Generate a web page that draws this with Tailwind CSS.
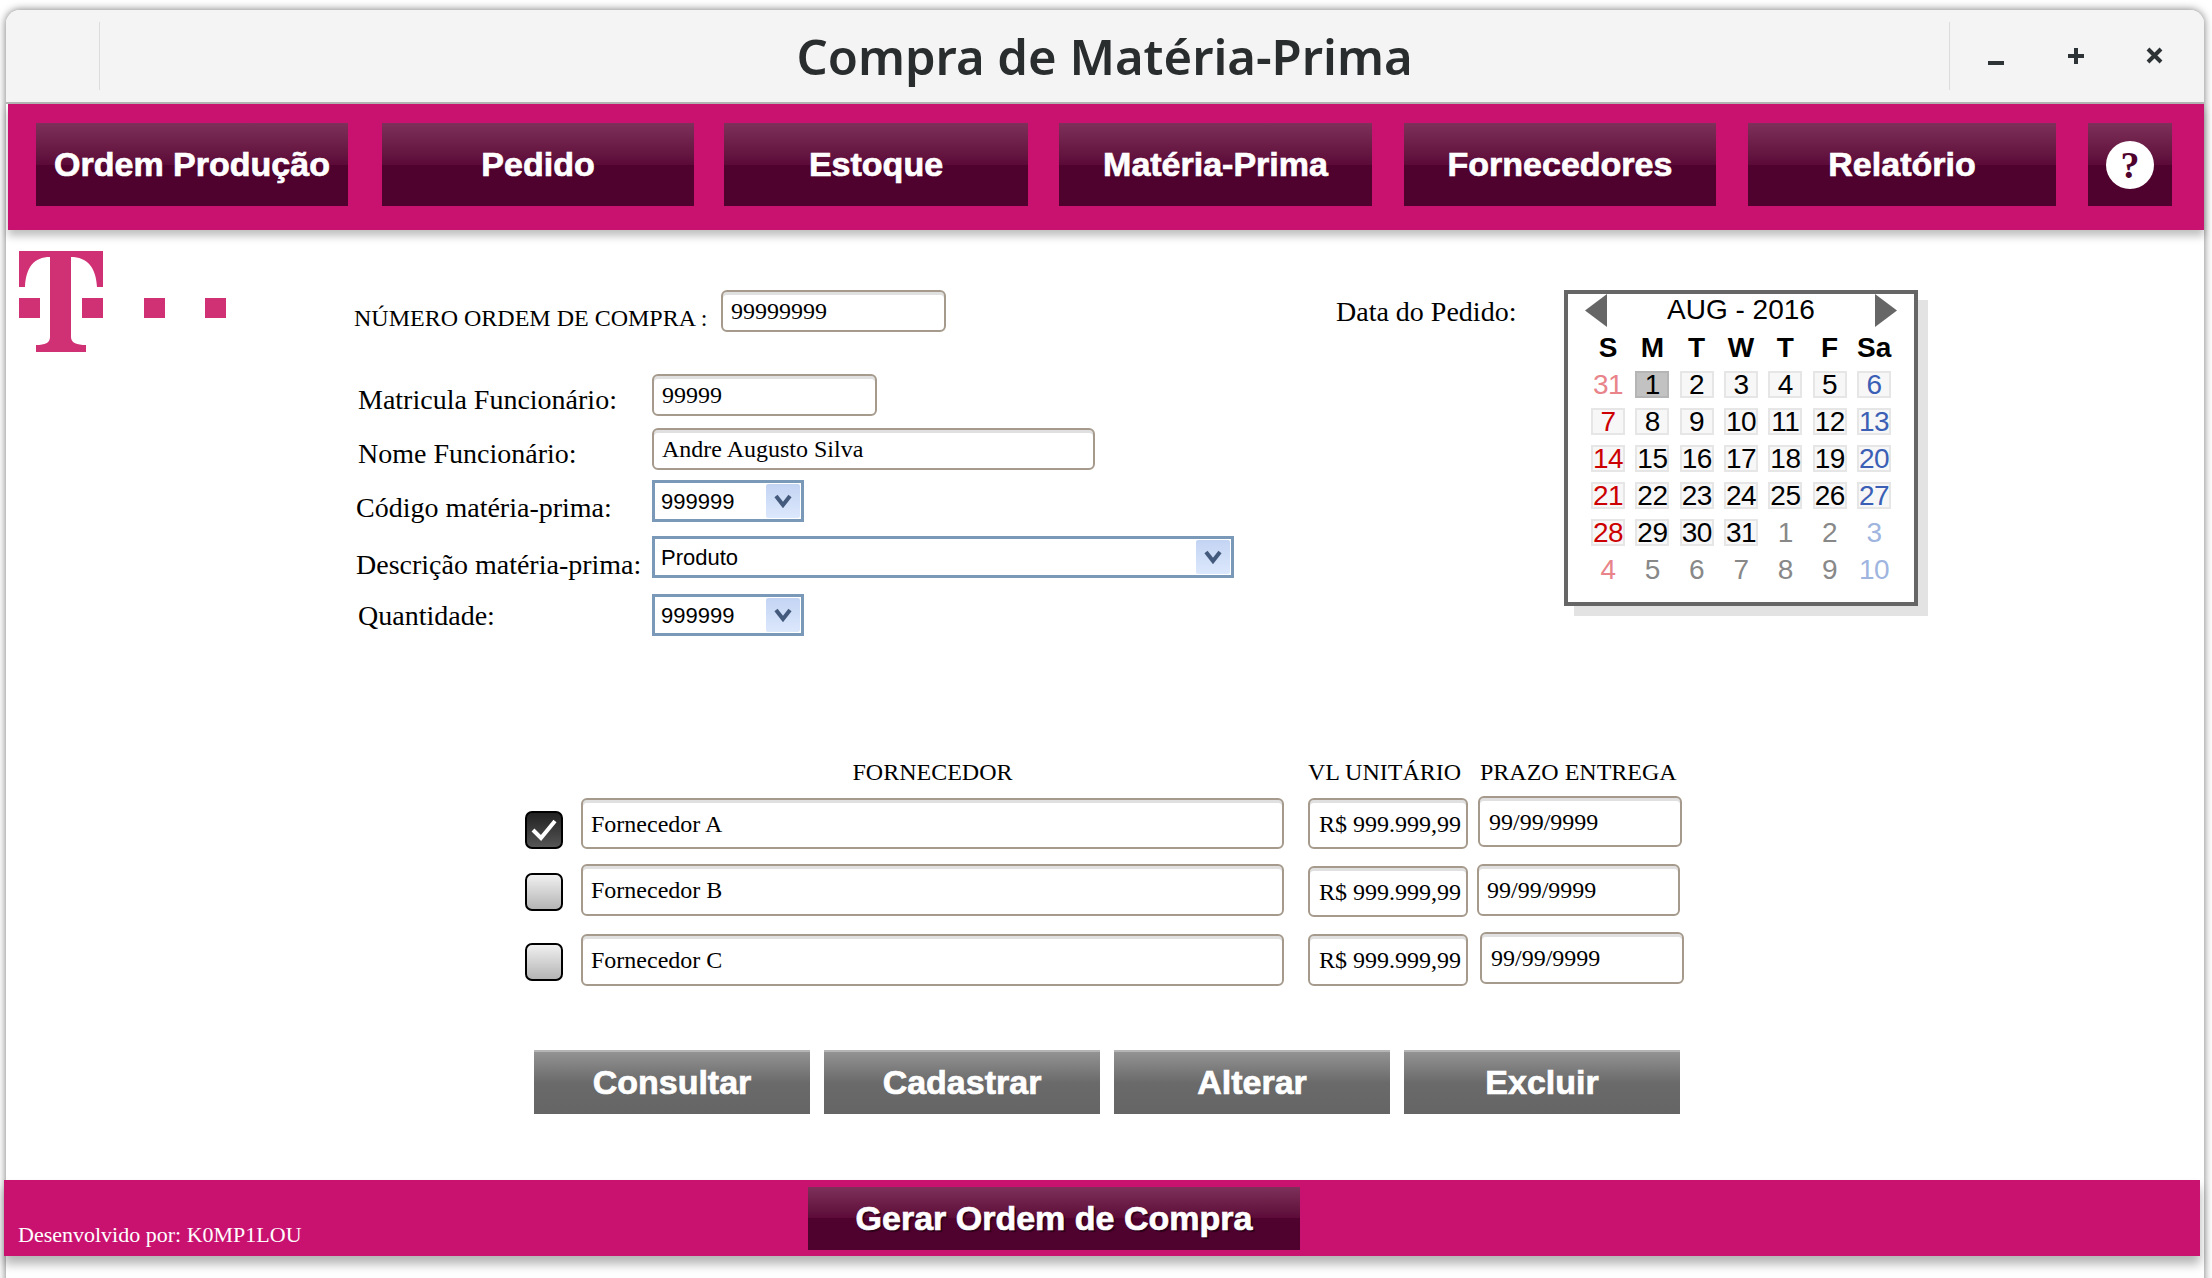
<!DOCTYPE html>
<html lang="pt-BR">
<head>
  <meta charset="UTF-8">
  <meta name="viewport" content="width=device-width, initial-scale=1.0">
  <script src="https://cdn.jsdelivr.net/npm/@tailwindcss/browser@4"></script>
  <title>Compra de Matéria-Prima</title>
</head>
<body class="bg-white overflow-hidden font-['Liberation_Serif',serif] text-black">
  <div class="ml-[6px] mt-[10px] w-[2198px] h-[1290px] rounded-t-[14px] bg-white shadow-[0_0_8px_rgba(0,0,0,0.55)]">

    <!-- title bar -->
    <div class="h-[92px] flex items-center rounded-t-[14px] bg-[#f4f4f4]">
      <div class="ml-[93px] w-px h-[68px] bg-[#dcdcdc]"></div>
      <div class="flex-1 pl-[160px] text-center font-['Noto_Sans',sans-serif] font-semibold text-[49px] leading-[60px] text-[#2a2d2e]">Compra de Matéria-Prima</div>
      <div class="w-px h-[68px] bg-[#dcdcdc]"></div>
      <div class="w-[254px] flex items-center">
        <svg class="ml-[38px] mt-[14px]" width="16" height="6" viewBox="0 0 16 6"><rect y="1" width="16" height="4" fill="#2e3436"/></svg>
        <svg class="ml-[63px] mt-[-1px]" width="18" height="18" viewBox="0 0 18 18"><path d="M9 1v16M1 9h16" stroke="#2e3436" stroke-width="4"/></svg>
        <svg class="ml-[61px] mt-[-1px]" width="17" height="17" viewBox="0 0 17 17"><path d="M2 2l13 13M15 2L2 15" stroke="#2e3436" stroke-width="4"/></svg>
      </div>
    </div>
    <div class="h-[2px] bg-[#b5b5b5]"></div>

    <!-- menu -->
    <div class="relative ml-[2px] h-[126px] pt-[19px] pl-[28px] flex items-start bg-[#c91270] shadow-[0_6px_8px_rgba(0,0,0,0.25)] font-['Liberation_Sans',sans-serif] font-bold text-[34px] text-white [text-shadow:2px_2px_1px_#2a0018] [-webkit-text-stroke:0.7px_white]">
      <button class="w-[312px] h-[83px] bg-linear-to-b from-[#7d3059] via-[#5c0a38] via-50% to-[#50022f] to-50%">Ordem Produção</button>
      <button class="ml-[34px] w-[312px] h-[83px] bg-linear-to-b from-[#7d3059] via-[#5c0a38] via-50% to-[#50022f] to-50%">Pedido</button>
      <button class="ml-[30px] w-[304px] h-[83px] bg-linear-to-b from-[#7d3059] via-[#5c0a38] via-50% to-[#50022f] to-50%">Estoque</button>
      <button class="ml-[31px] w-[313px] h-[83px] bg-linear-to-b from-[#7d3059] via-[#5c0a38] via-50% to-[#50022f] to-50%">Matéria-Prima</button>
      <button class="ml-[32px] w-[312px] h-[83px] bg-linear-to-b from-[#7d3059] via-[#5c0a38] via-50% to-[#50022f] to-50%">Fornecedores</button>
      <button class="ml-[32px] w-[308px] h-[83px] bg-linear-to-b from-[#7d3059] via-[#5c0a38] via-50% to-[#50022f] to-50%">Relatório</button>
      <button class="ml-[32px] w-[84px] h-[83px] flex items-center justify-center bg-linear-to-b from-[#7d3059] via-[#5c0a38] via-50% to-[#50022f] to-50%">
        <span class="w-[48px] h-[48px] rounded-full bg-white flex items-center justify-center text-[38px] leading-none text-[#50022f] font-['Liberation_Serif',serif] [text-shadow:none] [-webkit-text-stroke:0]">?</span>
      </button>
    </div>

    <!-- form area -->
    <div class="h-[950px] flex flex-col">
      <div class="flex items-start h-[406px]">
        <svg class="ml-[13px] mt-[21px] shrink-0" width="207" height="101" viewBox="0 0 207 101" fill="#d03174">
          <path d="M0 0H84V36H78C77 16 68 6 52 6V86C52 92 58 94 67 94V101H17V94C26 94 31 92 31 86V6C15 6 7 16 6 36H0Z"/>
          <rect x="0" y="47" width="21" height="20"/>
          <rect x="63" y="47" width="21" height="20"/>
          <rect x="125" y="47" width="21" height="20"/>
          <rect x="186" y="47" width="21" height="20"/>
        </svg>

        <div class="ml-[128px] w-[880px] shrink-0 pt-[60px] text-[28px]">
          <div class="flex items-center h-[42px]">
            <span class="w-[367px] mt-[14px] text-[24px] whitespace-nowrap">NÚMERO ORDEM DE COMPRA :</span>
            <div class="w-[225px] h-[42px] flex items-center pl-[8px] text-[24px] rounded-[6px] border-2 border-[#a59a8b] shadow-[inset_0_3px_0_#e0e0e0]">99999999</div>
          </div>
          <div class="flex items-center h-[42px] mt-[42px]">
            <span class="w-[298px] pl-[4px] mt-[10px] whitespace-nowrap">Matricula Funcionário:</span>
            <div class="w-[225px] h-[42px] flex items-center pl-[8px] text-[24px] rounded-[6px] border-2 border-[#a59a8b] shadow-[inset_0_3px_0_#e0e0e0]">99999</div>
          </div>
          <div class="flex items-center h-[42px] mt-[12px]">
            <span class="w-[298px] pl-[4px] mt-[10px] whitespace-nowrap">Nome Funcionário:</span>
            <div class="w-[443px] h-[42px] flex items-center pl-[8px] text-[24px] rounded-[6px] border-2 border-[#a59a8b] shadow-[inset_0_3px_0_#e0e0e0]">Andre Augusto Silva</div>
          </div>
          <div class="flex items-center h-[42px] mt-[10px]">
            <span class="w-[298px] pl-[2px] mt-[14px] whitespace-nowrap">Código matéria-prima:</span>
            <div class="w-[152px] h-[42px] flex items-center justify-between pl-[6px] pr-px font-['Liberation_Sans',sans-serif] text-[22px] border-[3px] border-[#7a98b8]">
              <span>999999</span>
              <span class="w-[34px] h-[34px] flex items-center justify-center rounded-[2px] bg-linear-to-b from-[#c3d4f3] to-[#dce8fc]">
                <svg width="18" height="14" viewBox="0 0 18 14"><path d="M2 2l7 9 7-9" fill="none" stroke="#445a7c" stroke-width="4"/></svg>
              </span>
            </div>
          </div>
          <div class="flex items-center h-[42px] mt-[14px]">
            <span class="w-[298px] pl-[2px] mt-[15px] whitespace-nowrap">Descrição matéria-prima:</span>
            <div class="w-[582px] h-[42px] flex items-center justify-between pl-[6px] pr-px font-['Liberation_Sans',sans-serif] text-[22px] border-[3px] border-[#7a98b8]">
              <span>Produto</span>
              <span class="w-[34px] h-[34px] flex items-center justify-center rounded-[2px] bg-linear-to-b from-[#c3d4f3] to-[#dce8fc]">
                <svg width="18" height="14" viewBox="0 0 18 14"><path d="M2 2l7 9 7-9" fill="none" stroke="#445a7c" stroke-width="4"/></svg>
              </span>
            </div>
          </div>
          <div class="flex items-center h-[42px] mt-[16px]">
            <span class="w-[298px] pl-[4px] mt-[2px] whitespace-nowrap">Quantidade:</span>
            <div class="w-[152px] h-[42px] flex items-center justify-between pl-[6px] pr-px font-['Liberation_Sans',sans-serif] text-[22px] border-[3px] border-[#7a98b8]">
              <span>999999</span>
              <span class="w-[34px] h-[34px] flex items-center justify-center rounded-[2px] bg-linear-to-b from-[#c3d4f3] to-[#dce8fc]">
                <svg width="18" height="14" viewBox="0 0 18 14"><path d="M2 2l7 9 7-9" fill="none" stroke="#445a7c" stroke-width="4"/></svg>
              </span>
            </div>
          </div>
        </div>

        <div class="ml-[102px] mt-[66px] w-[228px] shrink-0 text-[28px] leading-[32px] whitespace-nowrap">Data do Pedido:</div>

        <!-- calendar -->
        <div class="mt-[60px] w-[354px] h-[316px] shrink-0 border-4 border-[#666] bg-white shadow-[10px_10px_0_#e3e3e3] font-['Liberation_Sans',sans-serif] text-[28px]">
          <div class="flex items-center h-[33px] ml-[17px] w-[312px]">
            <svg width="22" height="33" viewBox="0 0 22 33"><path d="M22 0V33L0 16.5Z" fill="#666"/></svg>
            <div class="flex-1 text-center leading-[31px] pb-[2px] whitespace-nowrap">AUG - 2016</div>
            <svg width="22" height="33" viewBox="0 0 22 33"><path d="M0 0V33L22 16.5Z" fill="#666"/></svg>
          </div>
          <div class="ml-[23px] mt-[6px] grid grid-cols-[repeat(7,34px)] gap-x-[10.33px] h-[30px] font-bold leading-[30px] text-center">
            <div>S</div><div>M</div><div>T</div><div>W</div><div>T</div><div>F</div><div class="whitespace-nowrap">Sa</div>
          </div>
          <div class="ml-[23px] mt-[8px] grid grid-cols-[repeat(7,34px)] auto-rows-[27px] gap-x-[10.33px] gap-y-[10px] text-center leading-[23px] tracking-[-0.5px] whitespace-nowrap">
            <div class="border-2 border-transparent text-[#e8848a]">31</div>
            <div class="border-2 border-[#b5b5b5] bg-[#c2c2c2]">1</div>
            <div class="border-2 border-[#e6e6e6] bg-[#f7f7f7]">2</div>
            <div class="border-2 border-[#e6e6e6] bg-[#f7f7f7]">3</div>
            <div class="border-2 border-[#e6e6e6] bg-[#f7f7f7]">4</div>
            <div class="border-2 border-[#e6e6e6] bg-[#f7f7f7]">5</div>
            <div class="border-2 border-[#e6e6e6] bg-[#f7f7f7] text-[#3a5fb5]">6</div>

            <div class="border-2 border-[#e6e6e6] bg-[#f7f7f7] text-[#cc0000]">7</div>
            <div class="border-2 border-[#e6e6e6] bg-[#f7f7f7]">8</div>
            <div class="border-2 border-[#e6e6e6] bg-[#f7f7f7]">9</div>
            <div class="border-2 border-[#e6e6e6] bg-[#f7f7f7]">10</div>
            <div class="border-2 border-[#e6e6e6] bg-[#f7f7f7]">11</div>
            <div class="border-2 border-[#e6e6e6] bg-[#f7f7f7]">12</div>
            <div class="border-2 border-[#e6e6e6] bg-[#f7f7f7] text-[#3a5fb5]">13</div>

            <div class="border-2 border-[#e6e6e6] bg-[#f7f7f7] text-[#cc0000]">14</div>
            <div class="border-2 border-[#e6e6e6] bg-[#f7f7f7]">15</div>
            <div class="border-2 border-[#e6e6e6] bg-[#f7f7f7]">16</div>
            <div class="border-2 border-[#e6e6e6] bg-[#f7f7f7]">17</div>
            <div class="border-2 border-[#e6e6e6] bg-[#f7f7f7]">18</div>
            <div class="border-2 border-[#e6e6e6] bg-[#f7f7f7]">19</div>
            <div class="border-2 border-[#e6e6e6] bg-[#f7f7f7] text-[#3a5fb5]">20</div>

            <div class="border-2 border-[#e6e6e6] bg-[#f7f7f7] text-[#cc0000]">21</div>
            <div class="border-2 border-[#e6e6e6] bg-[#f7f7f7]">22</div>
            <div class="border-2 border-[#e6e6e6] bg-[#f7f7f7]">23</div>
            <div class="border-2 border-[#e6e6e6] bg-[#f7f7f7]">24</div>
            <div class="border-2 border-[#e6e6e6] bg-[#f7f7f7]">25</div>
            <div class="border-2 border-[#e6e6e6] bg-[#f7f7f7]">26</div>
            <div class="border-2 border-[#e6e6e6] bg-[#f7f7f7] text-[#3a5fb5]">27</div>

            <div class="border-2 border-[#e6e6e6] bg-[#f7f7f7] text-[#cc0000]">28</div>
            <div class="border-2 border-[#e6e6e6] bg-[#f7f7f7]">29</div>
            <div class="border-2 border-[#e6e6e6] bg-[#f7f7f7]">30</div>
            <div class="border-2 border-[#e6e6e6] bg-[#f7f7f7]">31</div>
            <div class="border-2 border-transparent text-[#888]">1</div>
            <div class="border-2 border-transparent text-[#888]">2</div>
            <div class="border-2 border-transparent text-[#9fb5e0]">3</div>

            <div class="border-2 border-transparent text-[#e8848a]">4</div>
            <div class="border-2 border-transparent text-[#888]">5</div>
            <div class="border-2 border-transparent text-[#888]">6</div>
            <div class="border-2 border-transparent text-[#888]">7</div>
            <div class="border-2 border-transparent text-[#888]">8</div>
            <div class="border-2 border-transparent text-[#888]">9</div>
            <div class="border-2 border-transparent text-[#9fb5e0]">10</div>
          </div>
        </div>
      </div>

      <!-- suppliers -->
      <div class="mt-[122px] ml-[519px] text-[24px]">
        <div class="flex h-[28px] leading-[28px] whitespace-nowrap">
          <div class="ml-[56px] w-[703px] text-center">FORNECEDOR</div>
          <div class="ml-[24px] w-[172px]">VL UNITÁRIO</div>
          <div>PRAZO ENTREGA</div>
        </div>

        <div class="flex items-start mt-[10px]">
          <div class="mt-[15px] w-[38px] h-[38px] rounded-[7px] border-2 border-black bg-linear-to-b from-[#222] to-[#555] flex items-center justify-center">
            <svg width="28" height="24" viewBox="0 0 28 24"><path d="M3 12l8 8L25 3" fill="none" stroke="#fff" stroke-width="4"/></svg>
          </div>
          <div class="ml-[18px] mt-[2px] w-[703px] h-[51px] flex items-center pl-[8px] rounded-[6px] border-2 border-[#a59a8b] shadow-[inset_0_3px_0_#e0e0e0]">Fornecedor A</div>
          <div class="ml-[24px] mt-[2px] w-[160px] h-[51px] flex items-center pl-[9px] whitespace-nowrap rounded-[6px] border-2 border-[#a59a8b] shadow-[inset_0_3px_0_#e0e0e0]">R$ 999.999,99</div>
          <div class="ml-[10px] w-[204px] h-[51px] flex items-center pl-[9px] rounded-[6px] border-2 border-[#a59a8b] shadow-[inset_0_3px_0_#e0e0e0]">99/99/9999</div>
        </div>

        <div class="flex items-start mt-[15px]">
          <div class="mt-[9px] w-[38px] h-[38px] rounded-[7px] border-2 border-black bg-linear-to-b from-[#f0f0f0] to-[#b5b5b5]"></div>
          <div class="ml-[18px] w-[703px] h-[52px] flex items-center pl-[8px] rounded-[6px] border-2 border-[#a59a8b] shadow-[inset_0_3px_0_#e0e0e0]">Fornecedor B</div>
          <div class="ml-[24px] mt-[2px] w-[160px] h-[51px] flex items-center pl-[9px] whitespace-nowrap rounded-[6px] border-2 border-[#a59a8b] shadow-[inset_0_3px_0_#e0e0e0]">R$ 999.999,99</div>
          <div class="ml-[9px] w-[203px] h-[52px] flex items-center pl-[8px] rounded-[6px] border-2 border-[#a59a8b] shadow-[inset_0_3px_0_#e0e0e0]">99/99/9999</div>
        </div>

        <div class="flex items-start mt-[15px]">
          <div class="mt-[11px] w-[38px] h-[38px] rounded-[7px] border-2 border-black bg-linear-to-b from-[#f0f0f0] to-[#b5b5b5]"></div>
          <div class="ml-[18px] mt-[2px] w-[703px] h-[52px] flex items-center pl-[8px] rounded-[6px] border-2 border-[#a59a8b] shadow-[inset_0_3px_0_#e0e0e0]">Fornecedor C</div>
          <div class="ml-[24px] mt-[2px] w-[160px] h-[52px] flex items-center pl-[9px] whitespace-nowrap rounded-[6px] border-2 border-[#a59a8b] shadow-[inset_0_3px_0_#e0e0e0]">R$ 999.999,99</div>
          <div class="ml-[12px] w-[204px] h-[52px] flex items-center pl-[9px] rounded-[6px] border-2 border-[#a59a8b] shadow-[inset_0_3px_0_#e0e0e0]">99/99/9999</div>
        </div>

        <div class="flex gap-[14px] ml-[9px] mt-[64px] font-['Liberation_Sans',sans-serif] font-bold text-[34px] text-white [text-shadow:2px_2px_1px_#222] [-webkit-text-stroke:0.7px_white]">
          <button class="w-[276px] h-[64px] pb-[2px] border-t-2 border-[#b5b5b5] bg-linear-to-b from-[#939393] via-[#6a6a6a] via-50% to-[#656565]">Consultar</button>
          <button class="w-[276px] h-[64px] pb-[2px] border-t-2 border-[#b5b5b5] bg-linear-to-b from-[#939393] via-[#6a6a6a] via-50% to-[#656565]">Cadastrar</button>
          <button class="w-[276px] h-[64px] pb-[2px] border-t-2 border-[#b5b5b5] bg-linear-to-b from-[#939393] via-[#6a6a6a] via-50% to-[#656565]">Alterar</button>
          <button class="w-[276px] h-[64px] pb-[2px] border-t-2 border-[#b5b5b5] bg-linear-to-b from-[#939393] via-[#6a6a6a] via-50% to-[#656565]">Excluir</button>
        </div>
      </div>
    </div>

    <!-- footer -->
    <div class="relative -ml-[2px] w-[2196px] h-[76px] flex items-start bg-[#c91270] shadow-[0_8px_10px_rgba(0,0,0,0.3)] text-white">
      <div class="w-[804px] pl-[14px] pt-[42px] text-[22px] leading-[25px] whitespace-nowrap">Desenvolvido por: K0MP1LOU</div>
      <button class="mt-[7px] w-[492px] h-[63px] font-['Liberation_Sans',sans-serif] font-bold text-[34px] [text-shadow:2px_2px_1px_#2a0018] [-webkit-text-stroke:0.7px_white] bg-linear-to-b from-[#7d3059] via-[#5c0a38] via-50% to-[#50022f] to-50%">Gerar Ordem de Compra</button>
    </div>
  </div>
</body>
</html>
